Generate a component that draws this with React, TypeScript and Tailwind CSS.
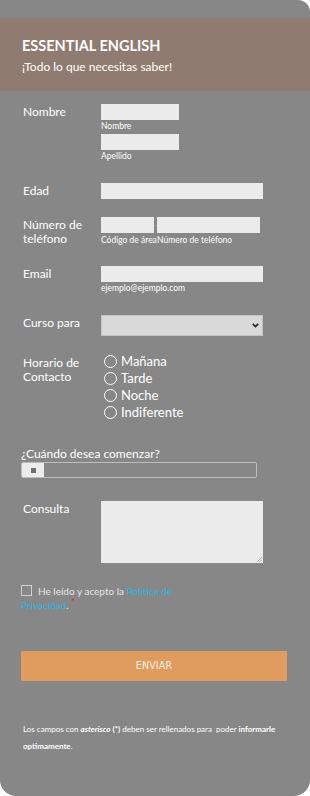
import React from "react";

const FONT = { fontFamily: "Lato, 'Open Sans', sans-serif" };

function Row({ label, children, className = "" }: { label: React.ReactNode; children: React.ReactNode; className?: string }) {
  return (
    <div className={`flex ${className}`}>
      <div className="w-[80px] shrink-0 pl-[2px] pt-[1px] text-[12px] leading-[14px] text-white">{label}</div>
      <div className="flex-1">{children}</div>
    </div>
  );
}

const Sub = ({ children }: { children: React.ReactNode }) => (
  <div className="mt-[1px] text-[8.5px] leading-[11px] text-white">{children}</div>
);

export default function App() {
  return (
    <div className="w-[310px] h-[796px] bg-white" style={FONT}>
      <div className="h-full bg-[#878787] rounded-tr-[12px] rounded-b-[16px] pt-[18px]">
        {/* Header */}
        <div className="h-[73px] bg-[#8f7b6f] px-[22px] pt-[19px]">
          <div className="text-[14.5px] leading-[17px] font-bold text-white">ESSENTIAL ENGLISH</div>
          <div className="mt-[5px] text-[12px] leading-[15px] text-white">¡Todo lo que necesitas saber!</div>
        </div>

        <div className="px-[21px] pt-[13px]">
          <Row label="Nombre">
            <div className="h-[16px] w-[78px] bg-[#ebebeb]" />
            <Sub>Nombre</Sub>
            <div className="mt-[2px] h-[16px] w-[78px] bg-[#ebebeb]" />
            <Sub>Apellido</Sub>
          </Row>

          <Row label="Edad" className="mt-[21px]">
            <div className="h-[16px] w-[162px] bg-[#ebebeb]" />
          </Row>

          <Row label={<>Número de<br />teléfono</>} className="mt-[18px]">
            <div className="flex items-center">
              <div className="h-[16px] w-[53px] bg-[#ebebeb]" />
              <div className="w-[3px] text-center text-[6px] leading-[16px] text-[#bdbdbd]">-</div>
              <div className="h-[16px] w-[103px] bg-[#ebebeb]" />
            </div>
            <div className="mt-[2px] flex text-[8.5px] leading-[11px] text-white">
              <span className="w-[56px] shrink-0 whitespace-nowrap">Código de área</span>
              <span className="whitespace-nowrap">Número de teléfono</span>
            </div>
          </Row>

          <Row label="Email" className="mt-[20px]">
            <div className="h-[16px] w-[162px] bg-[#ebebeb]" />
            <Sub>ejemplo@ejemplo.com</Sub>
          </Row>

          <Row label="Curso para" className="mt-[21px]">
            <div className="relative h-[21px] w-[162px] bg-[#d9d9d9] border border-[#c4c4c4]">
              <svg className="absolute right-[3px] top-[7px]" width="7" height="5" viewBox="0 0 7 5">
                <path d="M0.8 0.8 L3.5 3.6 L6.2 0.8" fill="none" stroke="#222" strokeWidth="1.7" />
              </svg>
            </div>
          </Row>

          <Row label={<>Horario de<br />Contacto</>} className="mt-[19px]">
            <div className="ml-[3px] flex flex-col gap-[4px]">
              {["Mañana", "Tarde", "Noche", "Indiferente"].map((o) => (
                <label key={o} className="flex items-center gap-[4px] text-[13px] leading-[13px] text-white">
                  <span className="h-[13px] w-[13px] shrink-0 rounded-full border-[1.5px] border-white" />
                  {o}
                </label>
              ))}
            </div>
          </Row>

          <div className="mt-[28px] text-[12px] leading-[14px] text-white">¿Cuándo desea comenzar?</div>
          <div className="mt-[1px] flex h-[16px] w-[236px] rounded-[2px] border border-[#bdbdbd] overflow-hidden">
            <div className="flex w-[22px] items-center justify-center bg-[#ececec]">
              <span className="h-[5px] w-[5px] bg-[#6f6f6f]" />
            </div>
            <div className="flex-1" />
          </div>

          <Row label="Consulta" className="mt-[23px]">
            <div className="relative h-[62px] w-[162px] bg-[#ebebeb]">
              <svg className="absolute bottom-[1px] right-[1px]" width="5" height="5" viewBox="0 0 5 5">
                <path d="M5 0 L0 5 M5 2.5 L2.5 5" stroke="#9a9a9a" strokeWidth="0.8" />
              </svg>
            </div>
          </Row>

          <div className="mt-[22px] flex items-start text-[10px] leading-[13px] text-[#e6e6e6]">
            <span className="mr-[6px] h-[11px] w-[11px] shrink-0 border border-[#d0d0d0]" />
            <span>He leído y acepto la <span className="text-[#2bb5e6]">Politica de</span></span>
          </div>
          <div className="text-[10px] leading-[14px] text-[#e6e6e6]">
            <span className="text-[#2bb5e6]">Privacidad</span>. <span className="relative -top-[4px] text-[9px] text-[#e02020]">*</span>
          </div>

          <button className="mt-[38px] h-[30px] w-[266px] bg-[#e09c5e] text-[10.5px] tracking-[0.2px] text-[#f6eee6]" style={{ fontFamily: "'DejaVu Sans Condensed', 'Liberation Sans Narrow', sans-serif" }}>
            ENVIAR
          </button>

          {/* footer note */}
          <div className="mt-[40px] pl-[2px] text-[8px] leading-[17px] text-white">
            <div className="whitespace-nowrap">
              Los campos con <b><i>asterisco</i> (*)</b> deben ser rellenados para&nbsp; poder <b>informarle</b>
            </div>
            <div>
              <b>optimamente</b>.
            </div>
          </div>
        </div>
      </div>
    </div>
  );
}
